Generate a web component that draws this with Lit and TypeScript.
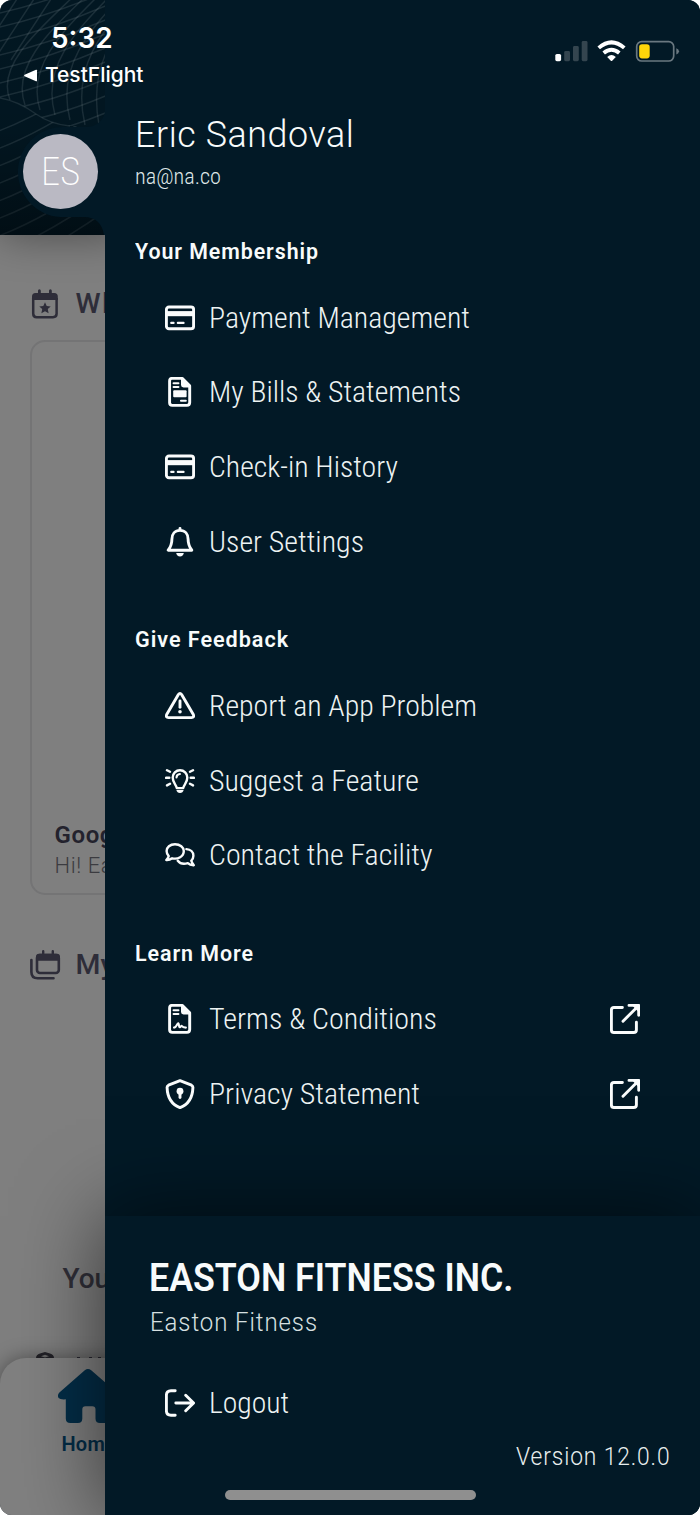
import { LitElement, html, svg, css } from "lit";
import { customElement, property } from "lit/decorators.js";

/** One line of text, condensed or expanded horizontally to a set measure. */
@customElement("fit-text")
class FitText extends LitElement {
  @property({ type: Number }) w = 0;
  @property() text = "";
  static styles = css`
    :host { display: block; white-space: nowrap; }
    span { display: inline-block; transform-origin: 0 50%; }
  `;
  render() {
    return html`<span>${this.text}</span>`;
  }
  updated() {
    const s = this.renderRoot.querySelector("span") as HTMLElement;
    s.style.transform = "none";
    const natural = s.getBoundingClientRect().width;
    this.style.width = this.w + "px";
    if (natural) s.style.transform = `scaleX(${this.w / natural})`;
  }
}

const docShape = svg`
  <path d="M7 1.4H17.2L24.7 8.9V25.6Q24.7 28.4 21.9 28.4H7.2Q4.6 28.4 4.6 25.8V4Q4.6 1.4 7 1.4Z"/>
  <path class="f" d="M16 1.5H18L25 8.5V10.4H18.5Q16 10.4 16 8Z"/>
  <path class="t" d="M8.6 6.2H13.4M8.6 10H13.4"/>`;

const icons: Record<string, unknown> = {
  card: svg`<rect x="1.4" y="4" width="27.2" height="21.8" rx="2.6"/>
    <rect class="f" x="1.5" y="8.1" width="27" height="5.1"/>
    <path class="t" d="M6.2 19.9H8.6M12.8 19.9H18.6"/>`,
  bill: svg`${docShape}<rect class="f" x="8.2" y="13.2" width="13.4" height="7" rx="1"/>
    <path class="t" d="M16 23.8H20.8"/>`,
  terms: svg`${docShape}<path class="t" d="M9 23.6C11.6 23.6 12.2 18.8 13.3 19.2C14.3 19.6 13.6 23.6 15 23.2C16 22.9 16.2 21.5 16.9 22C17.6 23.3 18.2 23.6 20.9 23.6"/>`,
  bell: svg`<path d="M15 3.4C9.8 3.4 6.9 7.3 6.9 12.2C6.9 17.6 5.6 20 3.2 23.2H26.8C24.4 20 23.1 17.6 23.1 12.2C23.1 7.3 20.2 3.4 15 3.4ZM15 1.4V3"/>
    <path class="f" d="M11.2 26H18.8Q18.2 29.4 15 29.4Q11.8 29.4 11.2 26Z"/>`,
  warn: svg`<path d="M13.4 3.5Q15 1.2 16.6 3.5L28.3 23.5Q29.5 26.6 26.5 26.6H3.5Q.5 26.6 1.7 23.5Z"/>
    <path d="M15 10V16.2"/><circle class="f" cx="15" cy="20.8" r="1.8"/>`,
  bulb: svg`<path class="m" d="M11.8 22.1C11.3 18.6 7.7 17 7.7 11.5A7.3 7.3 0 0 1 22.3 11.5C22.3 17 18.7 18.6 18.2 22.1Z"/>
    <path class="t" d="M11.5 11.5Q11.7 8.2 14.9 8"/>
    <path class="f" d="M11.4 24H18.6Q18 27 15 27Q12 27 11.4 24Z"/>
    <path class="m" d="M1.1 11.8H4.3M25.7 11.8H28.9M2 4.3L5 5.8M28 4.3L25 5.8M2 19.4L5 17.8M28 19.4L25 17.8"/>`,
  chat: svg`<path class="m" d="M10 4.2C5 4.2 1.6 7.3 1.6 11.1C1.6 13.3 2.6 14.9 3.7 16.1Q3.2 18 1.3 20C3.8 20.2 5.7 19.4 7.2 18.3C13 19.6 18.8 16.7 18.8 11.1C18.8 7.3 15 4.2 10 4.2Z"/>
    <path class="m" d="M21.4 9.1C25.6 9.4 28.4 12.2 28.4 15.7C28.4 18 27.4 19.6 26.3 20.8Q26.8 22.8 28.8 25.2C26 25.3 24.3 24.6 22.8 23.2C18.8 24.4 14.7 23.3 12.8 20.8"/>`,
  shield: svg`<path d="M15 1.6L26.5 6.2Q28 7 27.9 8.6C27.6 18.5 22.8 25.6 15 28.7C7.2 25.6 2.4 18.5 2.1 8.6Q2 7 3.5 6.2Z"/>
    <circle class="f" cx="15" cy="12.2" r="3.4"/><path d="M15 13V18.6"/>`,
  out: svg`<path d="M10.2 2.8H6Q1.4 2.8 1.4 7.2V22.8Q1.4 27.2 6 27.2H10.2M10.8 15H28M20.7 7.2L28.6 15L20.7 22.8"/>`,
  ext: svg`<path d="M12.4 3.5H4Q1.4 3.5 1.4 6.1V25.9Q1.4 28.5 4 28.5H23.6Q26.4 28.5 26.4 25.9V18.2M13 17.2L28 2.2M19 1.4H28.7V11.2"/>
    <path class="f" d="M22 1.2H29V8.4Z"/>`,
};

const icon = (name: string) => html`<svg class="ico" viewBox="0 0 30 30">${icons[name]}</svg>`;

interface Item { icon: string; label: string; w: number; ext?: boolean }
const groups: { title: string; w: number; items: Item[] }[] = [
  { title: "Your Membership", w: 184, items: [
    { icon: "card", label: "Payment Management", w: 261 },
    { icon: "bill", label: "My Bills & Statements", w: 252 },
    { icon: "card", label: "Check-in History", w: 189 },
    { icon: "bell", label: "User Settings", w: 155 },
  ] },
  { title: "Give Feedback", w: 154, items: [
    { icon: "warn", label: "Report an App Problem", w: 268 },
    { icon: "bulb", label: "Suggest a Feature", w: 210 },
    { icon: "chat", label: "Contact the Facility", w: 223.5 },
  ] },
  { title: "Learn More", w: 119, items: [
    { icon: "terms", label: "Terms & Conditions", w: 228, ext: true },
    { icon: "shield", label: "Privacy Statement", w: 211, ext: true },
  ] },
];

const mesh = () => {
  const lines: string[] = [];
  for (let i = 0; i < 12; i++) {
    const y = 14 + i * 14;
    lines.push(`M-4 ${y}Q50 ${y - 12 + Math.max(0, i - 6) * 3} 110 ${y - 38 + Math.max(0, i - 6) * 3}`);
  }
  return lines.join("");
};
const ribs = () => {
  const lines: string[] = [];
  for (let i = 0; i < 10; i++) {
    const x = 8 + i * 15;
    lines.push(`M${x + 66 - i * 3} -4C${x + 30 - i * 2} 30 ${x - 12} 66 ${x + 2} ${100 + i * 5}`);
  }
  for (let i = 0; i < 4; i++) lines.push(`M${2 + i * 17} -4L${-40 + i * 17} 60`);
  return lines.join("");
};
const waves = () => {
  const lines: string[] = [];
  for (let i = 0; i < 9; i++) {
    const y = 132 + i * 17.5;
    lines.push(`M-4 ${y}Q45 ${y - 18} 110 ${y - 64}`);
  }
  return lines.join("");
};

@customElement("app-root")
class AppRoot extends LitElement {
  static styles = css`
    :host { display: block; width: 700px; height: 1515px; background: #fff;
      font-family: Roboto, "Liberation Sans", sans-serif; color: #f8fbfb; }
    .phone { position: relative; display: flex; width: 700px; height: 1515px; overflow: hidden; border-radius: 12px; background: #021926; }
    .page { width: 105.3px; flex: none; height: 1515px; overflow: hidden; background: #7f7f7f; display: flex; flex-direction: column; color: #2e2d39; }
    .hero { width: 125px; height: 235px; flex: none; background: #021722; box-shadow: 0 0 44px rgba(0,0,0,.42); }
    .hero svg { display: block; }
    .sec { display: flex; align-items: center; gap: 15.5px; padding-left: 30px; height: 40px; flex: none; font-size: 28.5px; font-weight: 550; }
    .sec svg { width: 30px; height: 30px; flex: none; overflow: visible; }
    .first { margin-top: 48.5px; letter-spacing: 1.6px; }
    .news { box-sizing: border-box; margin: 16px 0 0 30px; width: 300px; height: 555px; flex: none; border: 2px solid #747475; border-radius: 15px;
      display: flex; flex-direction: column; justify-content: flex-end; padding: 0 0 12.5px 22.5px; }
    .news b { font-size: 24px; font-weight: 650; line-height: 32px; color: #23222d; letter-spacing: .6px; }
    .news i { font-style: normal; font-weight: 300; font-size: 22px; line-height: 29px; color: #3b3b40; letter-spacing: .6px; }
    .second { margin-top: 50px; }
    .you { margin: 278px 0 0 62.5px; height: 32px; line-height: 32px; font-size: 28px; font-weight: 500; flex: none; color: #302f38; }
    .peek { margin: 57px 0 0 36px; height: 6px; overflow: hidden; flex: none; }
    .peek svg { display: block; }
    .tabs { width: 300px; flex: 1; background: #808080; border-radius: 26px 0 0 0; box-shadow: 0 0 20px rgba(0,0,0,.4); color: #032d47;
      display: flex; flex-direction: column; padding: 11px 0 0 57px; box-sizing: border-box; gap: 8px; }
    .tabs svg { width: 62px; height: 54px; flex: none; }
    .tabs span { font-size: 20px; font-weight: 600; line-height: 26px; padding-left: 4.5px; letter-spacing: .2px; }
    .drawer { flex: 1; display: flex; flex-direction: column; background: #021926; position: relative; }
    .who { height: 191px; flex: none; padding: 110px 0 0 29.7px; box-sizing: border-box; }
    .name { font-weight: 300; font-size: 37.5px; line-height: 48px; letter-spacing: .6px; }
    .cond { font-family: "Roboto Condensed", Roboto, sans-serif; font-stretch: 75%; font-weight: 300; }
    .mail { font-size: 22px; line-height: 30px; margin-top: 4px; color: #dfe7e8; }
    .head { height: 89.5px; flex: none; box-sizing: border-box; padding: 44.3px 0 0 30px; font-size: 22.5px; line-height: 32px; font-weight: 580; letter-spacing: 1px; }
    .row { display: flex; align-items: center; height: 74.67px; padding: 0 60px 0 59.3px; gap: 14.7px; font-size: 30px; line-height: 40px; color: #edf3f3; }
    .ico { width: 30px; height: 30px; flex: none; fill: none; stroke: #fafcfc; stroke-width: 2.9; stroke-linecap: round; stroke-linejoin: round; }
    .ico .f { fill: #fafcfc; stroke: none; }
    .ico .t { stroke-width: 2.1; }
    .ico .m { stroke-width: 2.4; }
    .row fit-text + .ico { margin-left: auto; width: 30px; height: 30px; }
    .foot { margin-top: auto; height: 299px; box-sizing: border-box; background: #021926; box-shadow: 0 0 80px rgba(0,0,0,.6);
      padding: 37.5px 30px 0 0; display: flex; flex-direction: column; }
    .org { font-size: 38px; line-height: 48px; font-weight: 580; padding-left: 43.7px; }
    .sub { font-size: 26px; line-height: 34px; font-weight: 300; padding-left: 44.3px; margin-top: 3px; letter-spacing: 1px; color: #d7e0e1; }
    .foot .row { margin-top: 27px; }
    .ver { align-self: flex-end; margin-top: -1.5px; font-size: 26.5px; line-height: 34px; font-weight: 300; letter-spacing: 1px; color: #e8eeee; }
    .status { position: absolute; inset: 0 0 auto 0; height: 90px; display: flex; justify-content: space-between; align-items: flex-start;
      font-family: Inter, sans-serif; color: #fff; }
    .clock { padding: 20px 0 0 50.5px; font-size: 28px; line-height: 36px; font-weight: 560; }
    .back { display: flex; align-items: center; gap: 7px; padding: 4px 0 0 23px; font-size: 20.5px; line-height: 30px; font-weight: 500; }
    .back svg, .sys { display: block; }
    .sys { margin: 36px 18px 0 0; }
    .avatar { position: absolute; left: 23px; top: 134px; width: 75px; height: 75px; border-radius: 50%; background: #bab9c3; color: #fff;
      display: flex; align-items: center; justify-content: center; font-size: 38px; }
    .avatar.cond { font-weight: 250; }
    .home { position: absolute; left: 225px; bottom: 15px; width: 250.5px; height: 10px; border-radius: 5px; background: #8f8f8f; }
  `;

  page() {
    return html`<div class="page">
      <div class="hero"><svg width="106" height="235" viewBox="0 0 106 235">
        <defs>
          <linearGradient id="shade" x1="0" y1="0" x2="0" y2="1">
            <stop offset="0" stop-color="#000" stop-opacity="0"/><stop offset=".55" stop-color="#000" stop-opacity=".05"/><stop offset="1" stop-color="#000" stop-opacity=".4"/>
          </linearGradient>
          <clipPath id="top"><path d="M0 0H106V126H70Q50 124 36 114Q18 101 0 98Z"/></clipPath>
          <clipPath id="low"><path d="M0 98Q18 101 36 114Q50 124 70 126H106V235H0Z"/></clipPath>
        </defs>
        <g fill="none" stroke="#98a9ad" stroke-opacity=".17" stroke-width="1.5">
          <g clip-path="url(#top)"><path d=${mesh()}/><path d=${ribs()}/></g>
          <path d=${waves()} clip-path="url(#low)"/>
          <path d="M0 98Q18 101 36 114Q50 124 70 126"/>
        </g>
        <rect width="106" height="235" fill="url(#shade)"/>
        <path d="M106 108Q103 126.5 86 127H66A45 45 0 0 0 60 217H84Q101 217 104 235H106Z" fill="#021926"/>
      </svg></div>
      <div class="sec first"><svg viewBox="0 0 30 30"><path d="M3.2 9V24.5Q3.2 28.2 6.6 28.2H23Q26.6 28.2 26.6 24.8V9" fill="none" stroke="#2e2d39" stroke-width="2.5"/>
        <path d="M2 11V7.5Q2 4 5.5 4H8V1.8Q8 .3 9.4 .3Q10.8 .3 10.8 1.8V4H19V1.8Q19 .3 20.4 .3Q21.8 .3 21.8 1.8V4H24.3Q27.8 4 27.8 7.5V11Z" fill="#2e2d39"/>
        <path d="M15 13.2L16.7 16.9L20.7 17.4L17.8 20.1L18.6 24.2L15 22.2L11.4 24.2L12.2 20.1L9.3 17.4L13.3 16.9Z" fill="#2e2d39"/></svg><span>What</span></div>
      <div class="news"><b>Google</b><i>Hi! Easton</i></div>
      <div class="sec second"><svg viewBox="0 0 30 30"><rect x="7" y="5" width="21.8" height="18" rx="3" fill="none" stroke="#2e2d39" stroke-width="2.6"/>
        <path d="M6 10.8V7Q6 3.8 9 3.8H12V1.3Q12 0 13.2 0Q14.4 0 14.4 1.3V3.8H21.6V1.3Q21.6 0 22.8 0Q24 0 24 1.3V3.8H27Q30 3.8 30 7V10.8Z" fill="#2e2d39"/>
        <path d="M1.4 10V22Q1.4 28.3 7.7 28.3H23.5" fill="none" stroke="#2e2d39" stroke-width="2.6" stroke-linecap="round"/></svg><span>My</span></div>
      <div class="you">Your</div>
      <div class="peek"><svg width="70" height="6" viewBox="0 0 70 6"><path d="M0 6Q0 2.8 4 1.6L9 0L14 1.6Q18 2.8 18 6Z" fill="#26252c"/><path d="M5 4.2L9 2.8L13 4.2L9 5.6Z" fill="#777"/>
        <path d="M41 5H44V6H41ZM53 5H56V6H53ZM62 5H65V6H62Z" fill="#2e2d39"/></svg></div>
      <div class="tabs"><svg viewBox="0 0 62 54"><path d="M27.8 1.3Q31 -1.1 34.2 1.3L59.6 23.5Q62 26 60.4 29Q59 30.5 54.5 30.3V49Q54.5 54 49.5 54H43Q38.5 54 38.5 49.5V40.5Q38.5 37.3 35.3 37.3H28.5Q25.3 37.3 25.3 40.5V49.5Q25.3 54 20.8 54H13.5Q8.8 54 8.8 49.5V30.3Q3 30.7 1.6 29Q0 26 2.4 23.5Z" fill="#032d47"/></svg><span>Home</span></div>
    </div>`;
  }

  render() {
    return html`<div class="phone">
      ${this.page()}
      <div class="drawer">
        <div class="who">
          <fit-text class="name" w="219.5" text="Eric Sandoval"></fit-text>
          <fit-text class="mail cond" w="86" text="na@na.co"></fit-text>
        </div>
        ${groups.map((g) => html`
          <div class="head"><fit-text .w=${g.w} .text=${g.title}></fit-text></div>
          ${g.items.map((i) => html`<div class="row cond">${icon(i.icon)}<fit-text .w=${i.w} .text=${i.label}></fit-text>${i.ext ? icon("ext") : ""}</div>`)}`)}
        <div class="foot">
          <fit-text class="org" w="364.5" text="EASTON FITNESS INC."></fit-text>
          <fit-text class="sub" w="168" text="Easton Fitness"></fit-text>
          <div class="row cond">${icon("out")}<fit-text w="80" text="Logout"></fit-text></div>
          <fit-text class="ver" w="154.5" text="Version 12.0.0"></fit-text>
        </div>
      </div>
      <div class="avatar cond"><fit-text w="39" text="ES"></fit-text></div>
      <div class="status">
        <div>
          <div class="clock"><fit-text w="61.5" text="5:32"></fit-text></div>
          <div class="back"><svg width="15" height="13" viewBox="0 0 15 13"><path d="M14 1.2V11.8Q14 12.6 13 12.2L1.6 7.2Q.4 6.5 1.6 5.8L13 .8Q14 .4 14 1.2Z" fill="#fff"/></svg><fit-text w="98.5" text="TestFlight"></fit-text></div>
        </div>
        <svg class="sys" width="127" height="30" viewBox="555 36 127 30">
          <rect x="555.3" y="54" width="5.8" height="7.2" rx="1.6" fill="#fff"/>
          <g fill="#34454f"><rect x="564.2" y="51" width="5.8" height="10.2" rx="1.4"/><rect x="573" y="46" width="5.8" height="15.2" rx="1.4"/><rect x="581.7" y="41" width="5.8" height="20.2" rx="1.4"/></g>
          <g fill="none" stroke="#fff" stroke-width="3.9"><path d="M598.7 47.9Q611.5 36.8 624.3 47.9"/><path d="M603.7 53.1Q611.5 46.6 619.3 53.1"/></g>
          <path d="M607.2 57Q611.5 53.2 615.8 57L612.2 60.7Q611.5 61.3 610.8 60.7Z" fill="#fff"/>
          <rect x="636.7" y="41.6" width="37" height="19.4" rx="5" fill="none" stroke="#6a7880" stroke-width="1.7"/>
          <path d="M676.3 48.2Q679 49 679 51.3Q679 53.6 676.3 54.4Z" fill="#6a7880"/>
          <rect x="639.2" y="44.2" width="10.5" height="14.2" rx="2.8" fill="#ffd60a"/>
        </svg>
      </div>
      <div class="home"></div>
    </div>`;
  }
}
